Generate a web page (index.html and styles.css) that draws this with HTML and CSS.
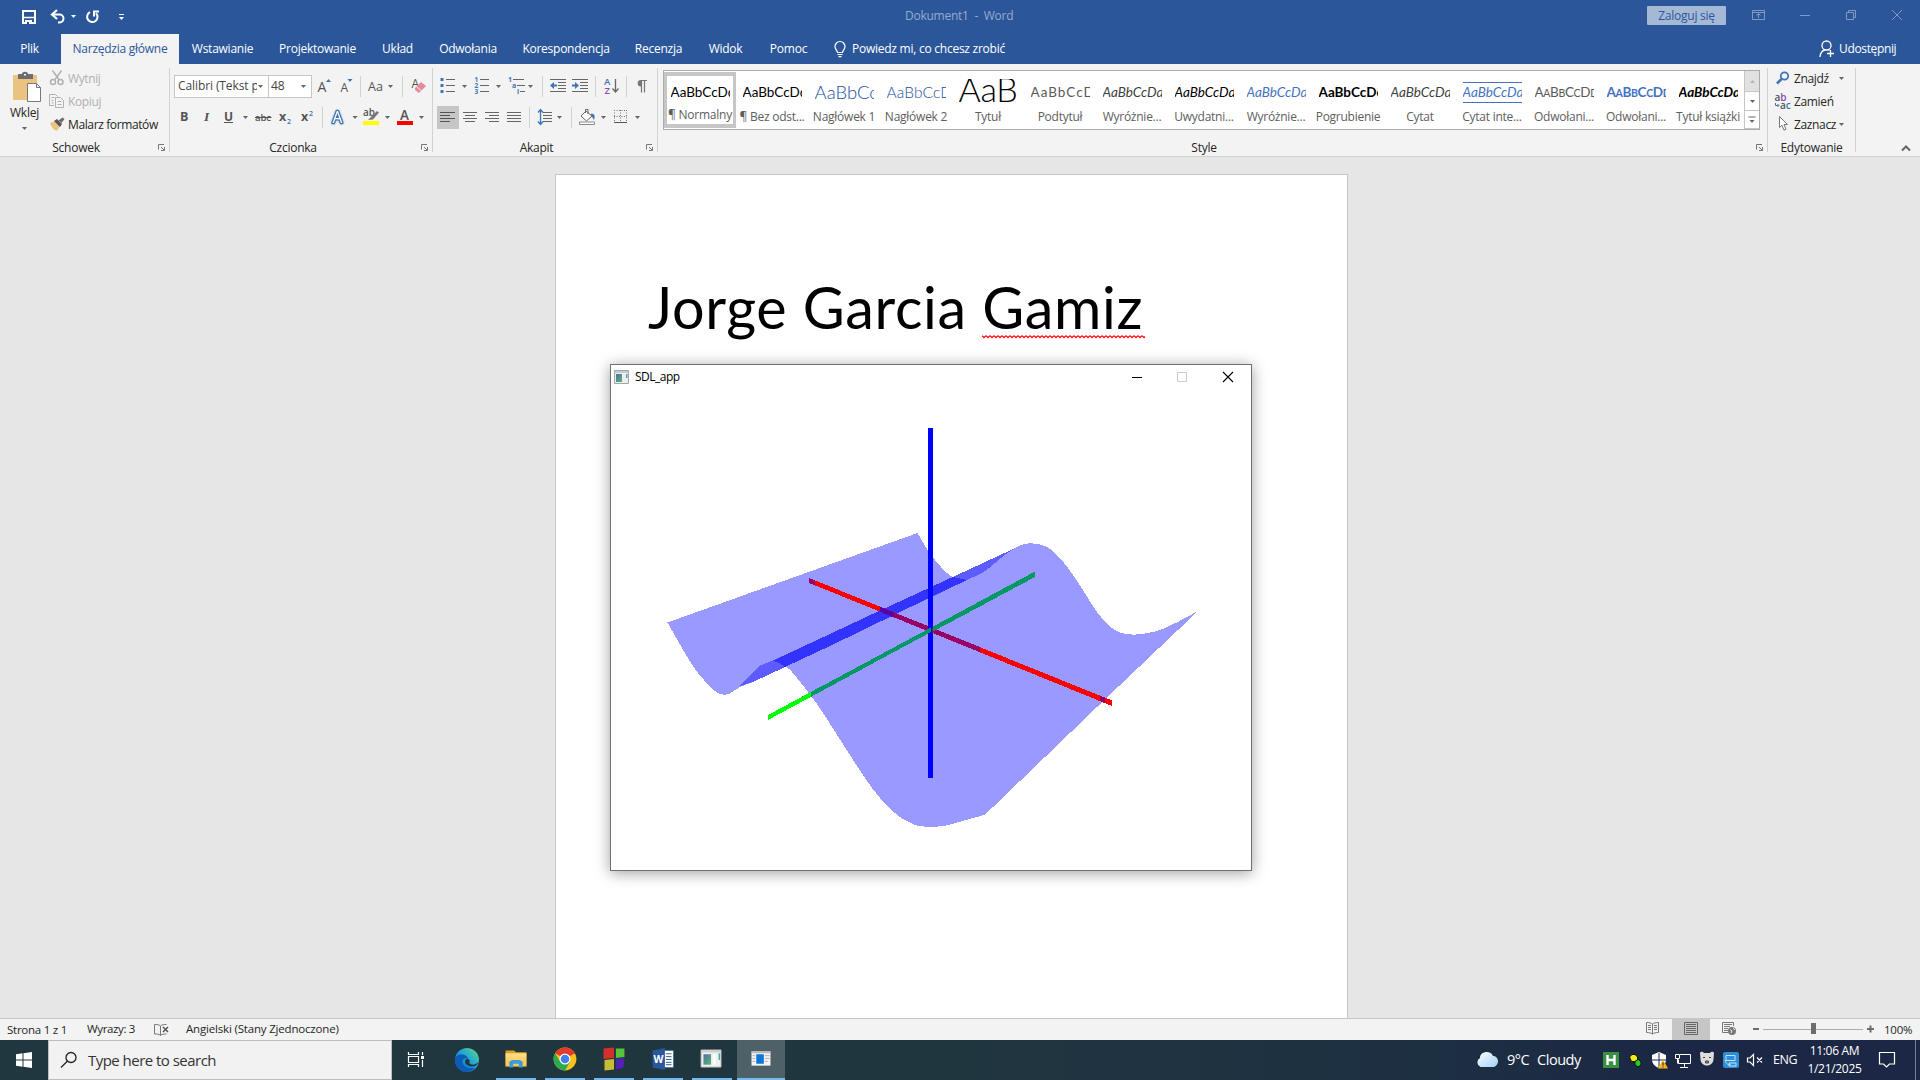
FILE: index.html
```html
<!DOCTYPE html>
<html lang="pl">
<head>
<meta charset="utf-8">
<title>Dokument1 - Word</title>
<link rel="stylesheet" href="styles.css">
</head>
<body>
<svg class="defs" width="0" height="0">
  <defs>
    <path id="ar" d="M0 0h5L2.500 3z" fill="#666"/>
    <path id="launch" d="M.5 5.500V.5H6M3 3l3 3M6.500 3v3.500H3" fill="none" stroke="#777"/>
    <linearGradient id="gEdge" x1="0" y1="1" x2="1" y2="0"><stop offset="0" stop-color="#0c59a4"/><stop offset=".5" stop-color="#1b9de2"/><stop offset="1" stop-color="#5fdc7a"/></linearGradient>
    <linearGradient id="gCloud" x1="0" y1="0" x2="1" y2="1"><stop offset="0" stop-color="#fff"/><stop offset="1" stop-color="#9fd0f5"/></linearGradient>
    <linearGradient id="gApp" x1="0" y1="0" x2="1" y2="1"><stop offset="0" stop-color="#4b6fae"/><stop offset="1" stop-color="#5fb56a"/></linearGradient>
    <linearGradient id="gFold" x1="0" y1="0" x2="0" y2="1"><stop offset="0" stop-color="#ffe089"/><stop offset="1" stop-color="#f8c447"/></linearGradient>
  </defs>
</svg>

<header class="titlebar">
  <svg width="140" height="34" viewBox="0 0 140 34" fill="none" stroke="#fff">
    <path d="M23 11h12v12H23z" stroke-width="2"/><path d="M23 17.500h12" stroke-width="1.500"/><path d="M25 20h7v4h-7z" fill="#fff" stroke="none"/><path d="M27 22h2v2h-2z" fill="#2b579a" stroke="none"/>
    <path d="M53 14.500h6.500a4 4 0 0 1 0 8H58" stroke-width="2"/><path d="M57 10l-5 4.500 5 4.500" stroke-width="2.200"/>
    <path d="M71 15h5l-2.500 3z" fill="#fff" stroke="none"/>
    <path d="M90 12.200a5.200 5.200 0 1 0 6 1" stroke-width="2"/><path d="M99 11.500h-5v5" stroke-width="2"/>
    <path d="M119 14.500h5"/><path d="M119 17h5l-2.500 3z" fill="#fff" stroke="none"/>
  </svg>
  <div class="doc-name">Dokument1&nbsp; -&nbsp; Word</div>
  <div class="sign-in">Zaloguj się</div>
  <svg width="194" height="34" viewBox="1726 0 194 34" fill="none" stroke="#7f9ac4">
    <path d="M1752.500 10.500h12v9h-12zM1752.500 12.500h12M1758.500 18v-4M1756.500 15.500l2-2 2 2"/>
    <path d="M1800 15.500h10"/><path d="M1846.500 12.500h7v7h-7zM1848.500 12.500v-2h7v7h-2"/><path d="M1892 10l10 10M1902 10l-10 10"/>
  </svg>
</header>

<nav class="tabs">
  <span class="file">Plik</span><span class="active">Narzędzia główne</span><span>Wstawianie</span><span>Projektowanie</span><span>Układ</span><span>Odwołania</span><span>Korespondencja</span><span>Recenzja</span><span>Widok</span><span>Pomoc</span>
  <div class="tell">
    <svg width="14" height="18" viewBox="0 0 14 18" fill="none" stroke="#fff" stroke-width="1.200"><path d="M4.500 12.500c0-2-2.500-3-2.500-6a5 5 0 0 1 10 0c0 3-2.500 4-2.500 6zM4.500 14.500h5M5.500 16.700h3"/></svg>
    <span>Powiedz mi, co chcesz zrobić</span>
  </div>
  <div class="share">
    <svg width="16" height="18" viewBox="0 0 16 18" fill="none" stroke="#fff" stroke-width="1.300"><circle cx="7.500" cy="5.500" r="4.500"/><path d="M1 17c.3-4 2.500-6.500 5-7M9.500 10l1 .5M11.500 10v7M8 13.500h7"/></svg>
    <span>Udostępnij</span>
  </div>
</nav>

<section class="ribbon">
  <div class="group clip">
    <div class="clip-body">
      <div class="paste">
        <svg width="30" height="34" viewBox="12 70 30 34"><path d="M13 75h24v25H13z" fill="#eac282"/><path d="M18 79v-5h4c0-3 6-3 6 0h5v5z" fill="#6d6d6d"/><path d="M24 74h2v1.500h-2z" fill="#fff"/><path d="M27.500 83.500h9l4 4v14h-13zM36.500 83.500v4h4" fill="#fff" stroke="#777"/></svg>
        <span>Wklej</span>
        <svg width="7" height="5" viewBox="0 0 7 5"><use href="#ar" x="1" y="1"/></svg>
      </div>
      <div class="clip-list">
        <div class="off"><svg width="16" height="18" viewBox="49 70 16 18" fill="none" stroke="#b1b1b1" stroke-width="1.500"><path d="M52.500 70.500l6.500 9M61.500 70.500l-6.500 9"/><circle cx="53" cy="82" r="2.500"/><circle cx="60.500" cy="82" r="2.500"/></svg>Wytnij</div>
        <div class="off"><svg width="16" height="18" viewBox="49 93 16 18" fill="none" stroke="#b1b1b1"><path d="M54 105.500h-4.500v-11h6l2 2M51.500 97.500h3M51.500 100.500h2M51.500 103h2"/><path d="M55.500 97.500h5l3 3v7h-8zM57.500 101.500h4M57.500 104.500h4"/></svg>Kopiuj</div>
        <div><svg width="16" height="18" viewBox="49 116 16 18"><path d="M50 123l5-2 5 5-3 5c-3-1-6-4-7-8z" fill="#eac282"/><path d="M54 121l3-2 5 5-2 3z" fill="#555"/><path d="M58.500 120.500l4-3 2 1.500-3 4z" fill="#6d6d6d"/></svg>Malarz formatów</div>
      </div>
    </div>
    <div class="label"><span>Schowek</span><svg width="8" height="8"><use href="#launch"/></svg></div>
  </div>

  <div class="group font">
    <div class="row">
      <div class="combo name"><span>Calibri (Tekst podstawowy)</span><svg width="9" height="5"><use href="#ar" x="1" y="1"/></svg></div>
      <div class="combo size"><span>48</span><svg width="9" height="5"><use href="#ar" x="1" y="1"/></svg></div>
      <svg width="24" height="28" viewBox="311 72 24 28"><text x="316.500" y="91.500" class="ic" font-size="14">A</text><path d="M325 82l2.500-3 2.500 3z" fill="#3f75b5"/></svg>
      <svg width="23" height="28" viewBox="335 72 23 28"><text x="339.500" y="91.500" class="ic" font-size="12">A</text><path d="M346.500 79h5l-2.500 3z" fill="#3f75b5"/></svg>
      <svg width="42" height="28" viewBox="358 72 42 28"><path d="M359.500 76v21" stroke="#d2d2d2"/><text x="367" y="90.500" class="ic" font-size="12.500">Aa</text><use href="#ar" x="387" y="85"/></svg>
      <svg width="31" height="28" viewBox="400 72 31 28"><path d="M401.500 76v21" stroke="#d2d2d2"/><text x="410.500" y="88" class="ic" font-size="12">A</text><path d="M420 82l5 4-7 7-4-3v-2z" fill="#e6899b"/><path d="M415.500 86.500l5 4.500" stroke="#f3f3f3"/></svg>
    </div>
    <div class="row">
      <svg width="24" height="28" viewBox="174 103 24 28"><text x="180" y="121" class="ic" font-size="12.500" font-weight="700">B</text></svg>
      <svg width="20" height="28" viewBox="198 103 20 28"><text x="204" y="121" class="ic serif" font-size="13.500">I</text></svg>
      <svg width="34" height="28" viewBox="218 103 34 28"><text x="224" y="120.500" class="ic" font-size="12" font-weight="700">U</text><path d="M224 122.500h9" stroke="#555"/><use href="#ar" x="243" y="116"/></svg>
      <svg width="22" height="28" viewBox="252 103 22 28"><text x="255" y="121" class="ic" font-size="9.500" font-weight="600" textLength="16">abc</text><path d="M255 117.500h16.500" stroke="#555"/></svg>
      <svg width="22" height="28" viewBox="274 103 22 28"><text x="279" y="121" class="ic" font-size="12.500" font-weight="700">x</text><text x="287" y="123.500" font-size="7" fill="#3f75b5" font-weight="600">2</text></svg>
      <svg width="25" height="28" viewBox="296 103 25 28"><text x="301" y="121" class="ic" font-size="12.500" font-weight="700">x</text><text x="309" y="115.500" font-size="7" fill="#3f75b5" font-weight="600">2</text></svg>
      <svg width="40" height="28" viewBox="321 103 40 28"><path d="M322.500 107v21" stroke="#d2d2d2"/><text x="332.500" y="122.500" font-size="15.500" fill="#fff" stroke="#3f75b5" stroke-width="2.600" stroke-linejoin="round" paint-order="stroke" class="glow">A</text><use href="#ar" x="352.500" y="116"/></svg>
      <svg width="33" height="28" viewBox="361 103 33 28"><text x="363" y="115.500" class="ic" font-size="10" font-weight="600">ab</text><path d="M368 120l9-9 2 1.500-6 7z" fill="#777"/><path d="M363 121h16v4h-16z" fill="#ff0"/><use href="#ar" x="385" y="116"/></svg>
      <svg width="36" height="28" viewBox="394 103 36 28"><text x="400" y="120" class="ic" font-size="13.500" font-weight="600">A</text><path d="M397 121h16v4h-16z" fill="#f00"/><use href="#ar" x="419" y="116"/></svg>
    </div>
    <div class="label"><span>Czcionka</span><svg width="8" height="8"><use href="#launch"/></svg></div>
  </div>

  <div class="group para">
    <div class="row">
      <svg width="36" height="28" viewBox="436 72 36 28"><path d="M446 79.500h9M446 85.500h9M446 91.500h9" stroke="#666"/><path d="M440.500 78h3v3h-3zM440.500 84h3v3h-3zM440.500 90h3v3h-3z" fill="#3f75b5"/><use href="#ar" x="462" y="85"/></svg>
      <svg width="34" height="28" viewBox="472 72 34 28"><path d="M480 79.500h9M480 85.500h9M480 91.500h9" stroke="#666"/><g font-size="6.500" font-weight="700" fill="#3f75b5"><text x="474.500" y="82">1</text><text x="474.500" y="88">2</text><text x="474.500" y="94">3</text></g><use href="#ar" x="496" y="85"/></svg>
      <svg width="38" height="28" viewBox="506 72 38 28"><path d="M513 79.500h11M517 85.500h8M520 91.500h5" stroke="#666"/><g font-size="7" font-weight="700" fill="#3f75b5"><text x="508" y="82">1</text><text x="512" y="88">a</text><text x="517" y="94">i</text></g><use href="#ar" x="528" y="85"/><path d="M542.500 76v21" stroke="#d2d2d2"/></svg>
      <svg width="25" height="28" viewBox="544 72 25 28"><path d="M550 79.500h16M558 82.500h8M558 85.500h8M558 88.500h8M550 91.500h16" stroke="#666"/><path d="M550 85.500l4-3.500v2.500h3v2h-3V89z" fill="#3f75b5"/></svg>
      <svg width="25" height="28" viewBox="569 72 25 28"><path d="M572 79.500h16M580 82.500h8M580 85.500h8M580 88.500h8M572 91.500h16" stroke="#666"/><path d="M579 85.500l-4-3.500v2.500h-3v2h3V89z" fill="#3f75b5"/></svg>
      <svg width="31" height="28" viewBox="594 72 31 28"><path d="M595.500 76v21" stroke="#d2d2d2"/><g font-size="9.500" font-weight="600"><text x="604" y="85" fill="#3f75b5">A</text><text x="604.500" y="93.500" fill="#8a4fb0">Z</text></g><path d="M615.500 79v12M612.500 88.500l3 3.500 3-3.500" fill="none" stroke="#666" stroke-width="1.300"/></svg>
      <svg width="32" height="28" viewBox="625 72 32 28"><path d="M626.500 76v21" stroke="#d2d2d2"/><path d="M641 80a3.300 3.300 0 0 0 0 6.600z" fill="#777"/><path d="M641.500 92.500v-12h5.500M644.500 80.500v12" fill="none" stroke="#777" stroke-width="1.200"/></svg>
    </div>
    <div class="row">
      <svg class="on" width="22" height="23" viewBox="437 106 22 23"><path d="M440 112.500h15M440 115.500h10M440 118.500h15M440 121.500h10" stroke="#555"/></svg>
      <svg width="22" height="28" viewBox="459 103 22 28"><path d="M463 112.500h14M465 115.500h10M463 118.500h14M465 121.500h10" stroke="#666"/></svg>
      <svg width="22" height="28" viewBox="481 103 22 28"><path d="M485 112.500h14M489 115.500h10M485 118.500h14M489 121.500h10" stroke="#666"/></svg>
      <svg width="23" height="28" viewBox="503 103 23 28"><path d="M507 112.500h14M507 115.500h14M507 118.500h14M507 121.500h14" stroke="#666"/></svg>
      <svg width="43" height="28" viewBox="526 103 43 28"><path d="M529.500 107v21" stroke="#d2d2d2"/><path d="M543 112.500h9M543 115.500h9M543 118.500h9M543 121.500h9" stroke="#666"/><path d="M540.500 110v14M538 112.500l2.500-3 2.500 3M538 121.500l2.500 3 2.500-3" fill="none" stroke="#3f75b5" stroke-width="1.300"/><use href="#ar" x="557" y="116"/></svg>
      <svg width="41" height="28" viewBox="569 103 41 28"><path d="M571.500 107v21" stroke="#d2d2d2"/><path d="M586 111l6 5-5.500 5-5.500-5zM585.500 113v-3.500h2.500V114" fill="#fff" stroke="#666"/><path d="M590.500 114c4-1 5 2 3.500 6-1-2-2-3-3.500-6z" fill="#3f75b5"/><path d="M579.500 122h15v2.500h-15z" fill="#fff" stroke="#8a8a8a"/><use href="#ar" x="601" y="116"/></svg>
      <svg width="36" height="28" viewBox="610 103 36 28"><path d="M614 110.500h13M614.500 110v12M626.500 110v12M620.500 110v12M614 116.500h13" stroke="#777" stroke-dasharray="1 1.500" fill="none"/><path d="M614 122.500h13" stroke="#555"/><use href="#ar" x="635" y="116"/></svg>
    </div>
    <div class="label"><span>Akapit</span><svg width="8" height="8"><use href="#launch"/></svg></div>
  </div>

  <div class="group styles">
    <div class="gallery">
      <div class="cell sel"><b class="s">AaBbCcDd</b><i>¶ Normalny</i></div>
      <div class="cell"><b class="s">AaBbCcDd</b><i>¶ Bez odst...</i></div>
      <div class="cell"><b class="s h1">AaBbCc</b><i>Nagłówek 1</i></div>
      <div class="cell"><b class="s h2">AaBbCcD</b><i>Nagłówek 2</i></div>
      <div class="cell"><b class="s ttl">AaB</b><i>Tytuł</i></div>
      <div class="cell"><b class="s sub">AaBbCcD</b><i>Podtytuł</i></div>
      <div class="cell"><b class="s it g">AaBbCcDd</b><i>Wyróżnie...</i></div>
      <div class="cell"><b class="s it">AaBbCcDd</b><i>Uwydatni...</i></div>
      <div class="cell"><b class="s it blue">AaBbCcDd</b><i>Wyróżnie...</i></div>
      <div class="cell"><b class="s bd">AaBbCcDd</b><i>Pogrubienie</i></div>
      <div class="cell"><b class="s it g">AaBbCcDd</b><i>Cytat</i></div>
      <div class="cell"><b class="s it blue ruled">AaBbCcDd</b><i>Cytat inte...</i></div>
      <div class="cell"><b class="s lg"><span class="sc">A<u>A</u>B<u>B</u>C<u>C</u>D<u>D</u></span></b><i>Odwołani...</i></div>
      <div class="cell"><b class="s blue bd"><span class="sc">A<u>A</u>B<u>B</u>C<u>C</u>D<u>D</u></span></b><i>Odwołani...</i></div>
      <div class="cell"><b class="s it bd">AaBbCcDd</b><i>Tytuł książki</i></div>
      <div class="scroll">
        <div class="dim"><svg width="7" height="5"><path d="M1 4h5L3.500 1z" fill="#b5b5b5"/></svg></div>
        <div><svg width="7" height="5"><use href="#ar" x="1" y="1"/></svg></div>
        <div><svg width="8" height="8"><path d="M.5 1h7" stroke="#666"/><use href="#ar" x="1.500" y="4"/></svg></div>
      </div>
    </div>
    <div class="label"><span>Style</span><svg width="8" height="8"><use href="#launch"/></svg></div>
  </div>

  <div class="group edit">
    <div class="edit-list">
      <div><svg width="18" height="18" viewBox="1774 70 18 18" fill="none" stroke="#3f75b5"><circle cx="1784.500" cy="76" r="3.700" stroke-width="1.800"/><path d="M1781.500 79l-4.500 4.500" stroke-width="2.600"/></svg>Znajdź<svg class="far" width="7" height="5"><use href="#ar" x="1" y="1"/></svg></div>
      <div><svg width="18" height="18" viewBox="1774 93 18 18" font-size="10" font-weight="600"><text x="1774.500" y="101" fill="#555">a<tspan fill="#8a4fb0">b</tspan></text><text x="1780" y="108.500" fill="#555">a<tspan fill="#3f75b5">c</tspan></text><path d="M1775.500 103v2.500h3M1777.500 104l1.500 1.500-1.500 1.500" fill="none" stroke="#3f75b5"/></svg>Zamień</div>
      <div><svg width="18" height="18" viewBox="1774 116 18 18"><path d="M1779.500 116.500v11l2.500-2.300 2 5 2-1-2-4.700h3.500z" fill="#fff" stroke="#777"/></svg>Zaznacz<svg class="near" width="7" height="5"><use href="#ar" x="1" y="1"/></svg></div>
    </div>
    <div class="label"><span>Edytowanie</span></div>
  </div>
  <div class="collapse"><svg width="12" height="8" viewBox="0 0 12 8"><path d="M2 6.500l4-4 4 4" fill="none" stroke="#666" stroke-width="2"/></svg></div>
</section>

<main class="workspace">
  <article class="page">
    <p>Jorge Garcia <span class="misspelt">Gamiz<svg width="163" height="4"><defs><pattern id="zig" width="4" height="4" patternUnits="userSpaceOnUse"><path d="M0 .7l2 2 2-2" fill="none" stroke="#f00" stroke-width="1.300"/></pattern></defs><rect width="163" height="4" fill="url(#zig)"/></svg></span></p>
  </article>
  <section class="window">
    <div class="win-title">
      <svg width="16" height="14" viewBox="0 0 16 14"><path d="M.5.5h14v13H.5z" fill="#eee" stroke="#9aa"/><path d="M1 1h13v2H1z" fill="#c5ccd0"/><path d="M2 4h6v8H2z" fill="url(#gApp)"/><path d="M12 4h1.500v4H12z" fill="#5fa0a0"/></svg>
      <span>SDL_app</span>
      <svg class="win-btns" width="130" height="24" viewBox="1121 365 130 24" fill="none" stroke="#000"><path d="M1132 377.500h10"/><path d="M1177.500 372.500h9v9h-9z" stroke="#ccc"/><path d="M1223 372l10 10M1233 372l-10 10" stroke-width="1.100"/></svg>
    </div>
    <svg class="plot" width="640" height="481" viewBox="611 389 640 481" shape-rendering="crispEdges">
      <g fill="#9999ff">
        <path d="M667.500 622.500L917.500 533L927.500 550Q936 562 945 571.500Q949 575 952.700 577L967 580L785 667L753 682L740 687L729.600 693.500Q724 696 718 693Q711 689 701 676.500Q694 669 684 651.500z"/>
        <path d="M773.400 660.700L1014.600 548.300Q1023 543.300 1031.400 543.300Q1039 543.300 1046 546.500Q1053 550 1063 561.700Q1073 574 1084 591.700C1092 605 1105 627 1119.800 632.500C1131 636.500 1147 634.500 1161.900 629.300Q1177 623 1198 611L1105 699.300L985 814.700L949.300 824.700C940 827.200 922 828 913.600 824.300C898 819 885 805 873.600 790C862 775 838 736 827.300 719.500Q819 706 811 696Q803 685 795 675.500Q789 668 785 666z"/>
      </g>
      <path d="M740 686L749 676L759 666L775 659.500L1014.600 548.300Q1005 554 995 563Q986 571 980 574L967 580L785 667L753 682z" fill="#5c5cff"/>
      <path d="M773 660.700L800 648L880 610.500L952.700 577L967 580L931 597L830 646L785 667Q779 662 773 660.700z" fill="#3333ff"/>
      <path d="M928 428h5v350h-5z" fill="#00f"/>
      <path d="M809 578L928 626V631L809 583zM932 627.800L1112 700.500V706L932 632.800z" fill="#f00"/>
      <path d="M809 578L815 580.500v4.900L809 583zM880 606.700L928 626v5.200L880 611.800zM932 627.800L980 647v5.200L932 632.800zM1099.500 695.500L1105 697.700v5.200L1099.500 700.900z" fill="#990066"/>
      <path d="M880 606.700L894 612.400v5.200L880 611.800z" fill="#5c00a3"/>
      <path d="M768 715L931 627.500V632L768 720zM933 626.500L1035 571.500V577L933 631.500z" fill="#009966"/>
      <path d="M768 715L811 692v4.800L768 720z" fill="#0f0"/>
    </svg>
  </section>
</main>

<footer class="status">
  <span class="st1">Strona 1 z 1</span><span class="st2">Wyrazy: 3</span>
  <svg width="16" height="14" viewBox="153 1021 16 14" fill="none" stroke="#777"><path d="M160.500 1024c-1.500-1.500-3.500-1.500-6-1.500v9.500c2.500 0 4.500 0 6 1.500V1024c1.500-1.500 3.500-1.500 6-1.500M160.500 1033.500c1.500-1.500 3.500-1.500 6-1.500"/><path d="M163 1025l5 5M168 1025l-5 5" stroke="#555" stroke-width="1.500"/></svg>
  <span class="st3">Angielski (Stany Zjednoczone)</span>
  <div class="views">
    <svg width="38" height="21" viewBox="1634 1019 38 21" fill="none" stroke="#777"><path d="M1652.500 1024c-1.500-1-3-1.500-6-1.500v10c3 0 4.500.5 6 1.500 1.500-1 3-1.500 6-1.500v-10c-3 0-4.500.5-6 1.500zM1652.500 1024v10M1648 1025.500h3M1648 1027.500h3M1648 1029.500h3M1654 1025.500h3M1654 1027.500h3M1654 1029.500h3"/></svg>
    <svg class="picked" width="38" height="21" viewBox="1672 1019 38 21" fill="none" stroke="#666"><path d="M1684.500 1022.500h13v12h-13zM1686 1024.500h10M1686 1026.500h10M1686 1028.500h10M1686 1030.500h10M1686 1032.500h10"/></svg>
    <svg width="38" height="21" viewBox="1710 1019 38 21" fill="none" stroke="#777"><path d="M1733.500 1026v-3.500h-11v10h6M1724 1024.500h8M1724 1026.500h6M1724 1028.500h4M1724 1030.500h4"/><circle cx="1732" cy="1031" r="4" fill="#777" stroke="none"/><path d="M1730 1029.500l2 1.500-1 2M1733 1028.500l2 1" stroke="#f3f3f3"/></svg>
    <svg width="134" height="21" viewBox="1748 1019 134 21"><path d="M1763 1029.500h100" stroke="#ababab"/><path d="M1753 1028h6v2h-6zM1867 1028h7v2h-7zM1869.500 1025.500h2v7h-2zM1811 1023h5v11h-5z" fill="#6d6d6d"/></svg>
    <span>100%</span>
  </div>
</footer>

<footer class="taskbar">
  <svg width="48" height="40" viewBox="0 1040 48 40" fill="#fff"><path d="M16 1054.300l6.500-1v6.200H16zM23.500 1053.200l8.500-1.200v7.500h-8.500zM16 1060.500h6.500v6.200l-6.500-1zM23.500 1060.500h8.500v7.500l-8.500-1.200z"/></svg>
  <div class="search"><svg width="18" height="18" viewBox="0 0 18 18" fill="none" stroke="#222" stroke-width="1.300"><circle cx="11" cy="6.500" r="5"/><path d="M7.500 10L1 16.500"/></svg><span>Type here to search</span></div>
  <svg width="50" height="40" viewBox="392 1040 50 40" fill="none" stroke="#fff"><path d="M408.500 1052v2.500h10V1052M408.500 1067v-2.500h10v2.500M408.500 1056.500h10v6h-10zM422.500 1052v3M422.500 1060v7" stroke-width="1.200"/><path d="M421 1056h3v3h-3z" fill="#fff" stroke="none"/></svg>
  <svg width="54" height="40" viewBox="442 1040 54 40"><circle cx="467" cy="1060" r="12" fill="url(#gEdge)"/><path d="M455 1060c0-4 4-6 8-5.500 3 .5 5 2.500 5 4.500-3-2-7 1-5 5 2 3.500 7 5 12 3.500-3 4-8 5.500-12 4-5-1.500-8-6-8-11.500z" fill="#0b5cb4"/><path d="M467 1059c2 0 3 1 2.500 2.500-.5 1.500 0 2.500 2 3 2.500.5 5-.5 7-2.500-1 3-3 4.500-6 4.500-4 0-7-2-7.500-4.500 0-1.500.5-3 2-3z" fill="#20373f"/></svg>
  <svg class="run" width="40" height="40" viewBox="496 1040 40 40"><path d="M505 1051h9l2 2h11v14h-22z" fill="#e3a01d"/><path d="M505 1054h22v14h-22z" fill="url(#gFold)"/><path d="M509 1069v-6l3-2h8l3 2v6h-4v-4h-6v4z" fill="#3a9be0"/></svg>
  <svg class="run" width="40" height="40" viewBox="545 1040 40 40"><circle cx="565" cy="1060" r="12" fill="#fbc116"/><path d="M565 1060L554.600 1054A12 12 0 0 1 575.400 1054z" fill="#e33b2e"/><path d="M554.600 1054A12 12 0 0 0 565 1072l5.500-9.500-11-.5z" fill="#2da94f"/><path d="M565 1054h10.400" stroke="#e33b2e" stroke-width="1"/><circle cx="565" cy="1060" r="5.800" fill="#fff"/><circle cx="565" cy="1060" r="4.500" fill="#3f82ee"/></svg>
  <svg class="run" width="40" height="40" viewBox="594 1040 40 40"><path d="M603 1049l11-1v11l-11 1z" fill="#d32f2f"/><path d="M616 1049h9v9l-9 1z" fill="#55c436"/><path d="M604 1061l10-1v11l-10 1z" fill="#c4bd35"/><path d="M616 1060l9-1-1 10-8 2z" fill="#5420b5"/></svg>
  <svg class="run" width="40" height="40" viewBox="643 1040 40 40"><path d="M662 1051h12v18h-12z" fill="#fff" stroke="#2b579a" stroke-width=".6"/><path d="M666 1054.500h6M666 1057.500h6M666 1060.500h6M666 1063.500h6M666 1066h6" stroke="#2b579a"/><path d="M652 1051l13-2.500v23l-13-2.500z" fill="#2b579a"/><text x="653" y="1064.500" font-size="11" font-weight="700" fill="#fff" textLength="10.500" lengthAdjust="spacingAndGlyphs">W</text></svg>
  <svg class="run" width="40" height="40" viewBox="692 1040 40 40"><path d="M700.500 1050.500h21v18h-21z" fill="#eee" stroke="#b9b9b9"/><path d="M701 1051h20v2h-20z" fill="#ccc"/><path d="M703 1055h8v11h-8z" fill="url(#gApp)"/><path d="M713 1055h3v11h-3z" fill="#fff"/><path d="M719 1054h1.500v7H719z" fill="#4a9"/></svg>
  <svg class="run now" width="48" height="40" viewBox="737 1040 48 40"><path d="M751 1052h20v15h-20z" fill="#f4f4f4"/><path d="M751 1052h20v2h-20z" fill="#bbb"/><path d="M756 1055h8v10h-8z" fill="#0a78d6"/><path d="M752 1056.500h3M752 1059.500h3M752 1062.500h3M765 1056.500h5M765 1059.500h5M765 1062.500h3" stroke="#aaa"/></svg>
  <div class="tray">
    <svg width="24" height="40" viewBox="1475 1040 24 40"><path d="M1480.500 1067a5 5 0 0 1-.5-9c0-7 11-8 13-2 6 0 7 9 1 11z" fill="url(#gCloud)"/></svg>
    <span class="wx">9°C</span><span class="wx2">Cloudy</span>
    <svg width="24" height="40" viewBox="1599 1040 24 40"><path d="M1603 1052h16v16h-16z" fill="#3b8f43"/><path d="M1607.500 1055v10M1614.500 1055v10M1607 1060h8" stroke="#fff" stroke-width="2.400"/></svg>
    <svg width="25" height="40" viewBox="1623 1040 25 40" stroke="#111"><path d="M1635 1060l3-1 3 3v3l-3 2-3-2z" fill="#2c2"/><path d="M1629.500 1057l2.500-2.500h3l2.500 2.500v3l-3 1.500h-3z" fill="#ee1"/></svg>
    <svg width="24" height="40" viewBox="1648 1040 24 40"><path d="M1659 1052l7 3v5c0 4-4 7-7 8-3-1-7-4-7-8v-5z" fill="#fff"/><path d="M1659 1053v15M1652 1060h14" stroke="#1b2744"/><path d="M1663 1059.500l5 9h-10z" fill="#f7b51e"/><path d="M1663 1062.500v3M1663 1066.500v1" stroke="#222"/></svg>
    <svg width="24" height="40" viewBox="1672 1040 24 40" fill="none" stroke="#fff"><path d="M1680 1054.500h10.500v9h-12v-4M1684.500 1064v3M1680 1067.500h8M1675.500 1054.500h4v4h-4zM1677.500 1058.500v5"/></svg>
    <svg width="24" height="40" viewBox="1696 1040 24 40"><path d="M1700 1053c1-2 3-1 4 0h6c1-1 3-2 4 0l-.5 6c0 4-3 6.500-6.500 6.500s-6.500-2.500-6.500-6.500z" fill="#ddd"/><path d="M1703 1057.500h2M1709 1057.500h2M1705.500 1061h3v2h-3z" stroke="#444" fill="#999"/></svg>
    <svg width="24" height="40" viewBox="1720 1040 24 40"><rect x="1723" y="1052" width="16" height="16" rx="2" fill="#2e8fd5"/><path d="M1726 1055.500h9v5h-9zM1729 1063h7v3h-7zM1725 1060c1 4 3 5 6 5" fill="none" stroke="#bfe3fb"/></svg>
    <svg width="25" height="40" viewBox="1744 1040 25 40" fill="none" stroke="#fff" stroke-width="1.200"><path d="M1747.500 1058h2.500l3.500-3.500v11l-3.500-3.500h-2.500zM1757 1057.500l5 5M1762 1057.500l-5 5"/></svg>
    <span class="lang">ENG</span>
    <div class="clock"><span>11:06 AM</span><span>1/21/2025</span></div>
    <svg width="46" height="40" viewBox="1874 1040 46 40" fill="none" stroke="#fff"><path d="M1879.500 1052.500h15v11.500h-5l-3 3-3-3h-4z" stroke-width="1.200"/><path d="M1915.500 1040v40" stroke="#76809a"/></svg>
  </div>
</footer>
</body>
</html>
```
FILE: styles.css
```css
* { box-sizing: border-box; }
body { margin: 0; width: 1920px; height: 1080px; overflow: hidden; display: flex; flex-direction: column; font: 12px/16px "Open Sans", "Noto Sans", sans-serif; letter-spacing: -0.25px; color: #262626; background: #e6e6e6; white-space: nowrap; }
svg { display: block; flex: none; letter-spacing: 0; }
.defs { position: absolute; }
.ic { fill: #555; }
.serif { font-family: "Liberation Serif", serif; font-style: italic; font-weight: 700; }
.glow { filter: drop-shadow(0 0 1px #9cc0e8); }

.titlebar { height: 34px; display: flex; background: #2b579a; flex: none; }
.doc-name { flex: 1; padding: 8px 0 0 765px; color: #95abcd; }
.sign-in { width: 79px; height: 19px; margin-top: 6px; background: #a5b9d7; color: #2b579a; text-align: center; line-height: 19px; border-radius: 1px; }

.tabs { height: 30px; flex: none; display: grid; grid-template-columns: 61px 118px 87px 103px 57px 84px 112px 73px 61px 65px 998px 101px; background: #2b579a; color: #fff; line-height: 30px; text-align: center; }
.tabs .file { padding-right: 2px; }
.tabs .active { background: #f3f3f3; color: #2b579a; }
.tell, .share { display: flex; align-items: center; text-align: left; }
.tell { padding-left: 12px; gap: 5px; }
.share { gap: 4px; letter-spacing: -.35px; }

.ribbon { height: 93px; flex: none; display: flex; background: #f3f3f3; border-bottom: 1px solid #d2d2d2; }
.group { display: flex; flex-direction: column; height: 84px; margin-top: 4px; padding-top: 4px; border-right: 1px solid #d2d2d2; flex: none; }
.row { display: flex; flex: none; height: 28px; margin-bottom: 3px; align-items: center; }
.label { display: flex; flex: none; align-items: center; justify-content: center; margin: auto 0 -4px; height: 16px; }
.label span { flex: 1; text-align: center; }
.label svg { margin-right: 3px; }
.clip { width: 170px; padding-top: 0; }
.font { width: 263px; padding-left: 4px; }
.para { width: 225px; padding-left: 3px; }
.para .row:nth-child(2) { padding-left: 1px; }
.styles { width: 1110px; padding: 2px 0 0 5px; }
.edit { width: 88px; padding-top: 0; }
.font .label span, .para .label span { padding-right: 9px; }
.clip .label span { padding-right: 6px; }
.styles .label span { padding-right: 11px; }
.clip-body { display: flex; height: 68px; flex: none; }
.paste { width: 49px; padding-top: 2px; display: flex; flex-direction: column; align-items: center; }
.paste > svg:first-child { margin-left: 5px; }
.paste span { margin: 1px 0 5px; }
.clip-list { margin-top: -1px; letter-spacing: -.38px; }
.clip-list > div, .edit-list > div { display: flex; align-items: center; height: 23px; gap: 3px; }
.clip-list .off { color: #b1b1b1; }
.edit-list { padding-left: 6px; margin-top: -1px; letter-spacing: -.35px; height: 69px; flex: none; }
.edit-list > div { gap: 2px; }
.edit-list .far { margin-left: 7px; }
.combo { height: 23px; border: 1px solid #c6c6c6; background: #fff; display: flex; align-items: center; padding-left: 3px; color: #444; }
.combo span { flex: 1; overflow: hidden; letter-spacing: -.1px; }
.combo svg { margin-right: 2px; }
.combo.name { width: 95px; }
.combo.size { width: 43px; border-left: 0; padding-left: 2px; }
.on { background: #c6c6c6; }

.gallery { display: flex; flex: none; height: 60px; width: 1097px; border: 1px solid #ababab; background: #fff; }
.cell { width: 72px; padding: 3px 6px 0; height: 58px; display: flex; flex-direction: column; align-items: center; overflow: hidden; }
.cell.sel { border: 4px solid #c6c6c6; border-width: 4px 3px; padding: 0 3px; margin-top: 1px; height: 56px; }
.cell.sel .s { height: 30px; line-height: 33px; }
.cell.sel i { margin-top: 1px; }
.cell i { font-style: normal; color: #5e5e5e; margin: 3px 0 0; }
.s { font: 13.5px/36px Lato, sans-serif; flex: none; height: 32px; width: 59px; overflow: hidden; color: #000; letter-spacing: 0; }
.h1 { font-size: 18.500px; font-weight: 300; color: #2450a0; }
.h2 { font-size: 15.500px; font-weight: 300; color: #2450a0; letter-spacing: .1px; }
.ttl { font-size: 34px; font-weight: 300; line-height: 20px; height: 25px; margin: 5px 0 2px; letter-spacing: -.4px; }
.sub { letter-spacing: 1px; color: #5a5a5a; }
.it { font-style: italic; }
.g { color: #404040; }
.lg { color: #5a5a5a; }
.blue { color: #4472c4; }
.bd { font-weight: 700; }
.ruled { border-top: 1px solid #4472c4; border-bottom: 1px solid #4472c4; height: 21px; line-height: 18px; margin: 8px 0 3px; }
.sc { letter-spacing: -.35px; }
.sc u { text-decoration: none; font-size: 10.500px; }
.scroll { width: 15px; border-left: 1px solid #c6c6c6; display: grid; grid-template-rows: 21px 19px 18px; }
.scroll div { display: flex; align-items: center; justify-content: center; border-bottom: 1px solid #c6c6c6; }
.scroll .dim { background: #e1e1e1; }
.collapse { display: flex; align-items: flex-end; padding: 0 0 4px 44px; }

.workspace { height: 861px; flex: none; position: relative; overflow: hidden; }
.page { width: 793px; height: 861px; margin: 17px 0 0 555px; border: 1px solid #c6c6c6; background: #fff; padding: 96px 0 0 92px; position: absolute; top: 0; }
.page p { margin: 0; font: 57.500px/72px Lato, sans-serif; color: #000; letter-spacing: .68px; }
.misspelt { position: relative; }
.misspelt svg { position: absolute; left: 0; bottom: 2px; }
.window { position: absolute; left: 610px; top: 207px; width: 642px; height: 507px; border: 1px solid #707070; background: #fff; box-shadow: 0 2px 14px rgba(0,0,0,.38); }
.win-title { height: 24px; display: flex; align-items: center; padding-left: 3px; gap: 5px; color: #000; letter-spacing: -.5px; }
.win-btns { margin-left: auto; }

.status { height: 22px; flex: none; border-top: 1px solid #c6c6c6; background: #f3f3f3; display: flex; align-items: center; font-size: 11.500px; }
.st1 { width: 80px; margin-left: 7px; }
.st2 { width: 66px; margin-bottom: 2px; letter-spacing: -.35px; }
.st3 { margin: 0 0 2px 17px; letter-spacing: -.18px; }
.views { display: flex; margin-left: auto; width: 286px; align-items: center; }
.picked { background: #c6c6c6; }
.views span { margin-left: 2px; }

.taskbar { height: 40px; flex: none; display: flex; background: linear-gradient(90deg, #20373f 0%, #20363f 50%, #1d2f42 75%, #1b2744 88%, #1b2744 100%); color: #fff; }
.search { width: 344px; background: #f2f2f2; border: 1px solid #bdbdbd; display: flex; align-items: center; padding-left: 11px; gap: 10px; font-size: 15px; color: #333; letter-spacing: -.53px; }
.run { border-bottom: 2px solid #76b9ed; margin-right: 9px; }
.run:nth-last-child(3) { margin-right: 5px; }
.run.now { background: #4e6068; margin: 0; }
.tray { margin-left: auto; display: flex; align-items: center; font-size: 14.500px; letter-spacing: -.45px; }
.wx { width: 30px; margin-left: 8px; }
.wx2 { width: 62px; }
.lang { font-size: 12.500px; width: 32px; margin-left: 4px; }
.clock { width: 69px; font-size: 12px; letter-spacing: -.3px; text-align: center; display: flex; flex-direction: column; line-height: 18px; padding-right: 10px; }
```
